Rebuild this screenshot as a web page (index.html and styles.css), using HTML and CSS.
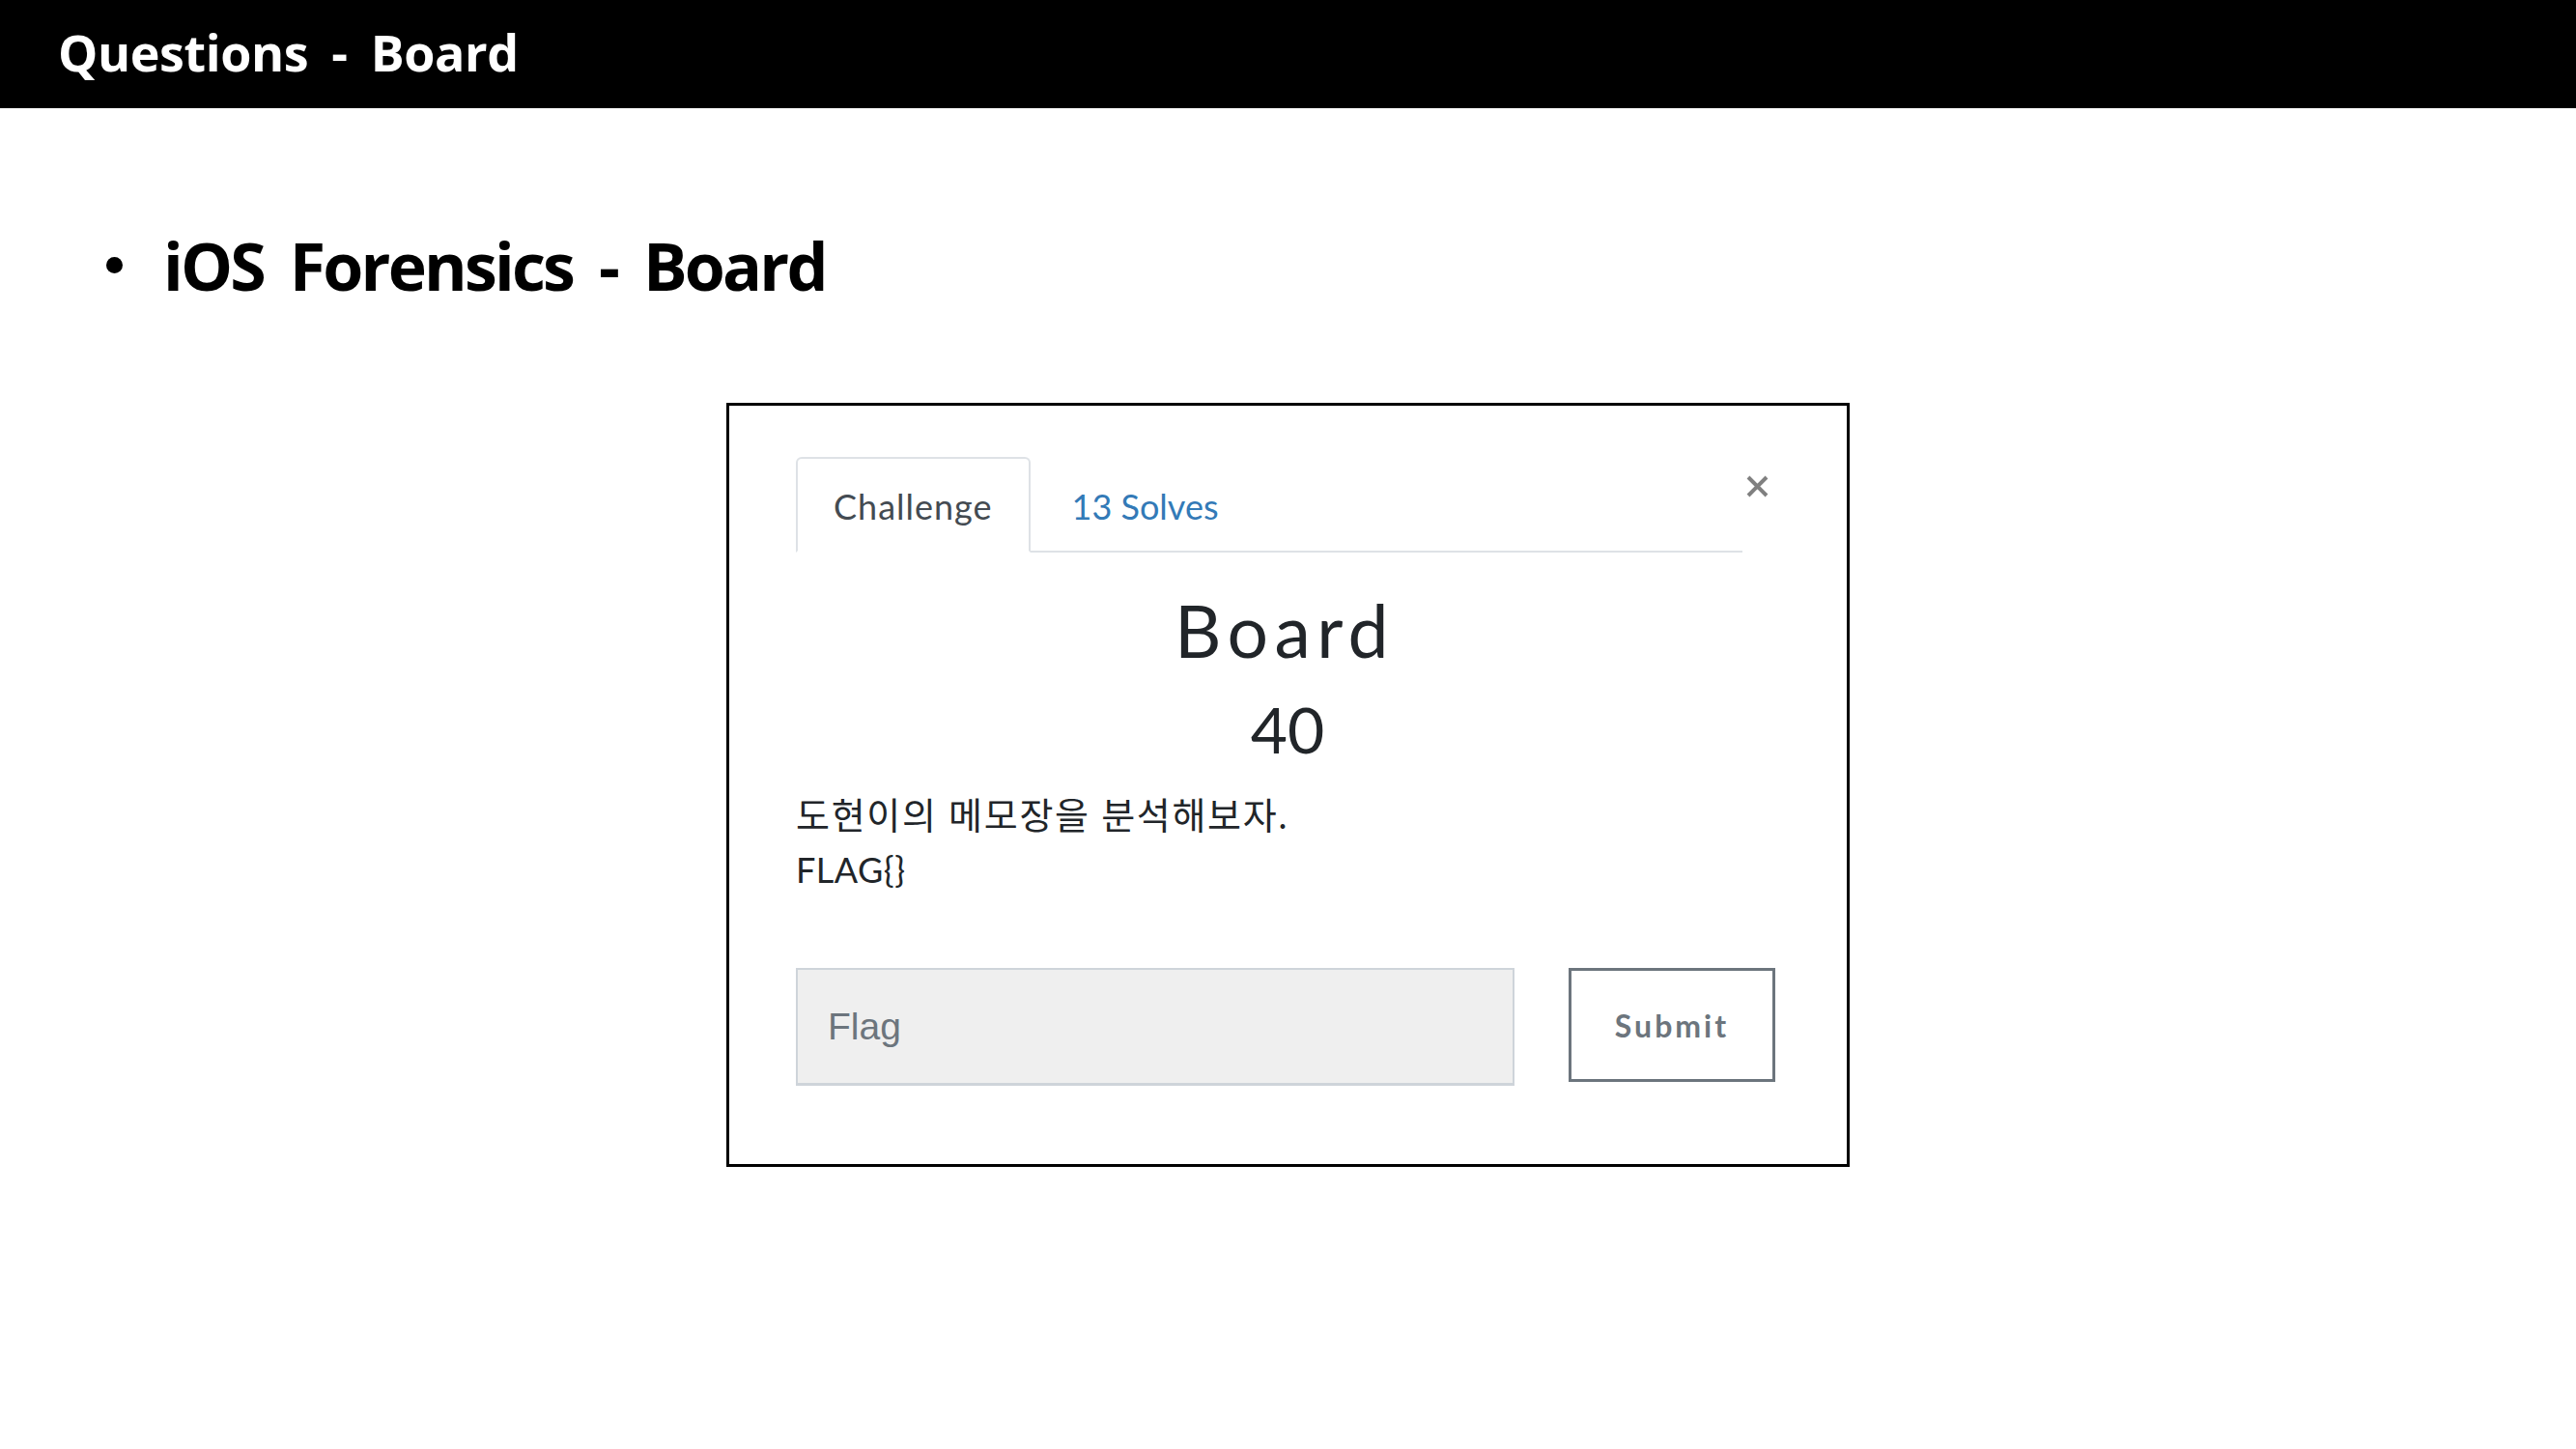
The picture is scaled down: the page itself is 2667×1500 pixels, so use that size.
FILE: index.html
```html
<!DOCTYPE html>
<html lang="ko">
<head>
<meta charset="utf-8">
<title>Questions - Board</title>
<link rel="stylesheet" href="styles.css">
</head>
<body>
<header class="topbar">
  <h1 class="topbar-title">Questions - Board</h1>
</header>
<main class="slide">
  <div class="bullet-row">
    <span class="bullet-dot"></span>
    <h2 class="bullet-text">iOS Forensics - Board</h2>
  </div>
  <section class="modal">
    <div class="modal-head">
      <nav class="tabs">
        <a class="tab tab-active">Challenge</a>
        <a class="tab tab-link">13 Solves</a>
      </nav>
      <button class="close" type="button" aria-label="Close">
        <svg width="23" height="23" viewBox="0 0 23 23"><path d="M2 2 L21 21 M21 2 L2 21" stroke="#808080" stroke-width="4" stroke-linecap="butt"/></svg>
      </button>
    </div>
    <h3 class="chal-name">Board</h3>
    <h4 class="chal-value">40</h4>
    <p class="chal-desc-ko">도현이의 메모장을 분석해보자.</p>
    <p class="chal-desc-flag">FLAG{}</p>
    <form class="submit-row">
      <input class="flag-input" type="text" placeholder="Flag">
      <button class="submit-btn" type="button">Submit</button>
    </form>
  </section>
</main>
</body>
</html>
```

FILE: styles.css
```css
html, body {
  margin: 0;
  padding: 0;
  background: #ffffff;
}

body {
  width: 2667px;
  height: 1500px;
  overflow: hidden;
  font-family: "Open Sans", "Noto Sans CJK KR", sans-serif;
}

.topbar {
  height: 112px;
  background: #000000;
  box-sizing: border-box;
  padding: 0 0 4px 60px;
}

.topbar-title {
  margin: 0;
  color: #ffffff;
  font-family: "Open Sans", "Noto Sans CJK KR", sans-serif;
  font-weight: 700;
  font-size: 52px;
  line-height: 108px;
  word-spacing: 11px;
  letter-spacing: -0.4px;
  white-space: nowrap;
}

.slide {
  padding-top: 128px;
}

.bullet-row {
  display: flex;
  align-items: center;
  height: 70px;
  padding-left: 110px;
}

.bullet-dot {
  width: 17px;
  height: 17px;
  border-radius: 50%;
  background: #000000;
  margin-right: 42px;
  margin-top: -2px;
}

.bullet-text {
  margin: 0;
  font-family: "Open Sans", "Noto Sans CJK KR", sans-serif;
  font-weight: 700;
  font-size: 68px;
  line-height: 70px;
  letter-spacing: -2.8px;
  word-spacing: 12px;
  color: #000000;
  white-space: nowrap;
}

.modal {
  width: 1163px;
  height: 791px;
  box-sizing: border-box;
  margin: 107px auto 0;
  border: 3px solid #000000;
  padding: 53px 70px 0 69px;
  font-family: "Lato", "Noto Sans CJK KR", sans-serif;
  color: #212529;
}

.modal-head {
  display: flex;
  align-items: flex-start;
}

.tabs {
  flex: 1;
  display: flex;
  border-bottom: 2px solid #dee2e6;
}

.tab {
  display: block;
  font-size: 36px;
  line-height: 91px;
  padding: 4px 37px 0 37px;
  border: 2px solid transparent;
  border-top-left-radius: 6px;
  border-top-right-radius: 6px;
  margin-bottom: -2px;
  white-space: nowrap;
}

.tab-active {
  color: #444b52;
  letter-spacing: 1px;
  border-color: #dee2e6 #dee2e6 #ffffff;
  background: #ffffff;
}

.tab-link {
  color: #337ab7;
  padding-left: 41px;
}

.close {
  width: 38px;
  height: 40px;
  padding: 19px 0 0 4px;
  margin: 0;
  border: 0;
  background: transparent;
  display: flex;
  align-items: flex-start;
  justify-content: flex-start;
  box-sizing: border-box;
}

.close svg {
  display: block;
}

.chal-name {
  margin: 43px 0 0;
  padding-right: 6px;
  text-align: center;
  font-weight: 400;
  font-size: 75px;
  line-height: 75px;
  letter-spacing: 6.5px;
  color: #212529;
}

.chal-value {
  margin: 32px 0 0;
  text-align: center;
  font-weight: 400;
  font-size: 66px;
  line-height: 66px;
  color: #212529;
}

.chal-desc-ko {
  margin: 30px 0 0;
  font-size: 38px;
  line-height: 51px;
  letter-spacing: 1.7px;
  color: #212529;
  white-space: nowrap;
}

.chal-desc-flag {
  margin: 6px 0 0;
  font-size: 36px;
  line-height: 51px;
  letter-spacing: 0.5px;
  color: #212529;
}

.submit-row {
  display: flex;
  align-items: flex-start;
  margin: 76px 0 0;
}

.flag-input {
  width: 744px;
  height: 122px;
  box-sizing: border-box;
  margin: 0;
  border: 2px solid #ced4da;
  border-bottom-width: 3px;
  background: #efefef;
  padding: 0 0 0 31px;
  font-family: "Liberation Sans", Arial, sans-serif;
  font-size: 39px;
  color: #495057;
  outline: none;
}

.flag-input::placeholder {
  color: #6c757d;
  opacity: 1;
}

.submit-btn {
  width: 214px;
  height: 118px;
  box-sizing: border-box;
  margin: 0 0 0 56px;
  border: 3px solid #6c757d;
  background: #ffffff;
  color: #6c757d;
  font-family: "Lato", sans-serif;
  font-weight: 700;
  font-size: 32px;
  letter-spacing: 3px;
  padding: 0 0 0 0;
}
```
